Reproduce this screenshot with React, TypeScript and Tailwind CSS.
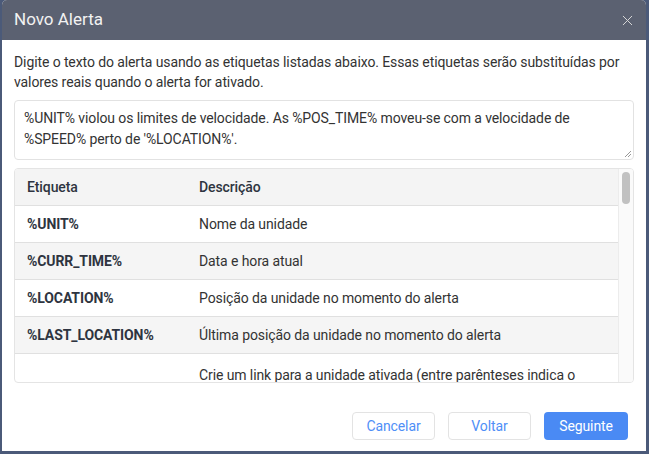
import { X } from 'lucide-react';

const rows = [
  { tag: '%UNIT%', desc: 'Nome da unidade' },
  { tag: '%CURR_TIME%', desc: 'Data e hora atual' },
  { tag: '%LOCATION%', desc: 'Posição da unidade no momento do alerta' },
  { tag: '%LAST_LOCATION%', desc: 'Última posição da unidade no momento do alerta' },
];

export default function App() {
  return (
    <div className="w-[649px] h-[454px] bg-[#4b5a79] pl-[2px] pr-[3px] pb-[3px] font-['Roboto',sans-serif] text-[14px] tracking-[-0.1px] text-[#333]">
      <div className="h-[451px] bg-white rounded-t-[5px] flex flex-col overflow-hidden">
        {/* header */}
        <div className="h-[40px] bg-[#5b6171] flex items-center justify-between pl-[12px] pr-[10px] shrink-0">
          <span className="text-[17px] tracking-normal text-[#f2f2f2]">Novo Alerta</span>
          <X size={17} strokeWidth={1.4} className="text-[#d8d8d8]" />
        </div>

        <div className="px-[12px] pt-[12px] flex flex-col">
          <p className="leading-[20px]">
            Digite o texto do alerta usando as etiquetas listadas abaixo. Essas etiquetas serão substituídas por valores reais quando o alerta for ativado.
          </p>

          {/* textarea */}
          <div className="mt-[8px] h-[60px] border border-[#e2e2e2] rounded-[4px] px-[9px] pt-[7px] leading-[21px] relative">
            %UNIT% violou os limites de velocidade. As %POS_TIME% moveu-se com a velocidade de %SPEED% perto de '%LOCATION%'.
            <svg className="absolute right-[1px] bottom-[1px]" width="9" height="9" viewBox="0 0 9 9">
              <line x1="8" y1="2" x2="2" y2="8" stroke="#999" strokeWidth="1" />
              <line x1="8" y1="5" x2="5" y2="8" stroke="#999" strokeWidth="1" />
            </svg>
          </div>

          {/* table */}
          <div className="mt-[8px] h-[215px] border border-[#e4e4e4] rounded-[4px] flex overflow-hidden">
            <div className="flex-1 flex flex-col">
              <div className="h-[37px] bg-[#f4f4f4] border-b border-[#e0e0e0] flex items-center font-medium text-[#2e3440] shrink-0">
                <span className="w-[184px] pl-[12px]">Etiqueta</span>
                <span>Descrição</span>
              </div>
              {rows.map((r, i) => (
                <div
                  key={r.tag}
                  className={`h-[37px] border-b border-[#e0e0e0] flex items-center shrink-0 ${i % 2 === 1 ? 'bg-[#f5f5f5]' : 'bg-white'}`}
                >
                  <span className="w-[184px] pl-[12px] font-bold text-[#2e3440]">{r.tag}</span>
                  <span>{r.desc}</span>
                </div>
              ))}
              <div className="flex pt-[11px] leading-[20px]">
                <span className="w-[184px] shrink-0" />
                <span className="pr-[10px]">
                  Crie um link para a unidade ativada (entre parênteses indica o tempo de expiração do link em horas)
                </span>
              </div>
            </div>
            <div className="w-[15px] bg-[#fafafa] border-l border-[#ececec] pt-[3px] flex justify-center shrink-0">
              <div className="w-[8px] h-[32px] rounded-full bg-[#c1c1c1]" />
            </div>
          </div>
        </div>

        {/* footer */}
        <div className="mt-auto pb-[11px] pr-[18px] flex justify-end gap-[13px]">
          <button className="w-[83px] h-[28px] border border-[#e3e3e3] rounded-[4px] text-[#4f8ff7] bg-white">Cancelar</button>
          <button className="w-[83px] h-[28px] border border-[#e3e3e3] rounded-[4px] text-[#4f8ff7] bg-white">Voltar</button>
          <button className="w-[84px] h-[28px] rounded-[4px] text-white bg-[#4a8af4]">Seguinte</button>
        </div>
      </div>
    </div>
  );
}
